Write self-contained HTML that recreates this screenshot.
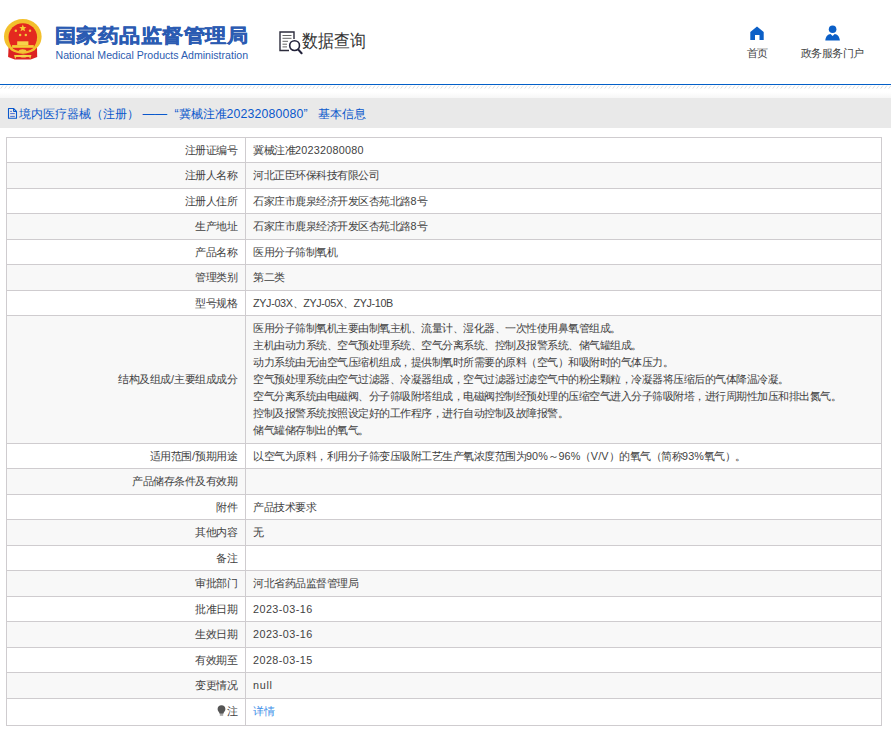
<!DOCTYPE html>
<html><head><meta charset="utf-8">
<style>
*{box-sizing:border-box}
html,body{margin:0;padding:0;background:#fff;width:891px;height:735px;overflow:hidden}
body{font-family:"Liberation Sans",sans-serif;color:#333;position:relative}
.abs{position:absolute}
#hdr{position:absolute;left:0;top:0;width:891px;height:84px;background:#fff}
#logo-cn{position:absolute;left:55px;top:23px;font-size:21px;letter-spacing:0.45px;font-weight:bold;color:#2b5bb2;-webkit-text-stroke:0.5px #2b5bb2;white-space:nowrap;transform-origin:0 0;transform:scale(1,0.9)}
#logo-en{position:absolute;left:55.5px;top:49px;font-size:10.6px;color:#2c5cb0;white-space:nowrap}
#sjcx{position:absolute;left:302px;top:29.5px;font-size:16px;color:#333;white-space:nowrap;transform-origin:0 0;transform:scale(1,1.13)}
.nav{position:absolute;font-size:10.8px;letter-spacing:-0.5px;color:#444;white-space:nowrap}
#bline{position:absolute;left:0;top:84px;width:891px;height:1px;background:#035fc8}
#hatch{position:absolute;left:0;top:85px;width:891px;height:5px}
#grad{position:absolute;left:0;top:92px;width:891px;height:6px;background:linear-gradient(#fff,#f6f6f6)}
#bar{position:absolute;left:0;top:98px;width:891px;height:29.5px;background:#e9e9e9}
#bartxt{position:absolute;left:19px;top:105.5px;font-size:12.3px;color:#0a58cc;white-space:nowrap}
table{position:absolute;left:6px;top:136.8px;width:876px;border-collapse:collapse;font-size:10.8px;letter-spacing:-0.5px;border:1px solid #cfcccf}
td{border:1px solid #cfcccf;height:25.5px;padding:0 7px;color:#3f3f3f;line-height:17px;vertical-align:middle}
td.l{width:239px;text-align:right;padding-right:8px}
tr:nth-child(even) td{background:#f8f8f8}
span.n{letter-spacing:0.1px}
a{color:#3d8fe8;text-decoration:none}
</style></head><body>
<div id="hdr">
 <svg class="abs" style="left:0;top:0" width="48" height="65" viewBox="0 0 48 65">
  <path d="M8.6 47 L8.1 57 L14.8 59.6 L30.6 59.6 L37.2 57 L37 47 Z" fill="#dc2222"/>
  <path d="M22.8 19.1 C33.3 19.1 41.6 27.2 41.6 36.6 C41.6 43 38.3 47.6 34 50.3 L22.8 53.6 L11.6 50.3 C7.3 47.6 4 43 4 36.6 C4 27.2 12.3 19.1 22.8 19.1 Z" fill="#f3c02c"/>
  <path d="M22.8 23.2 C30.8 23.2 37.1 29.5 37.1 37 C37.1 42 35 45.6 32.6 48.4 C29.6 50.8 26.5 51.2 22.8 51.2 C19.1 51.2 16 50.8 13 48.4 C10.6 45.6 8.5 42 8.5 37 C8.5 29.5 14.8 23.2 22.8 23.2 Z" fill="#e4291f"/>
  <path d="M22.8 24.6 L23.8 27 L26.4 27.2 L24.4 28.8 L25.1 31.3 L22.8 29.9 L20.5 31.3 L21.2 28.8 L19.2 27.2 L21.8 27 Z" fill="#f6cf35"/>
  <circle cx="15.8" cy="30.7" r="1.25" fill="#f2c63a"/>
  <circle cx="30" cy="30.7" r="1.25" fill="#f2c63a"/>
  <circle cx="20.1" cy="35" r="1.25" fill="#f2c63a"/>
  <circle cx="25.8" cy="35" r="1.25" fill="#f2c63a"/>
  <rect x="17.2" y="41.3" width="11.2" height="3.9" fill="#f7d24a"/>
  <rect x="12.1" y="45.1" width="21.7" height="2.7" fill="#f5cd36"/>
  <path d="M10 48 Q22.8 56 35.6 48 L35 50 Q22.8 57.5 10.6 50 Z" fill="#f3c02c"/>
  <ellipse cx="22.6" cy="50.8" rx="3.8" ry="1.6" fill="#f3c53a"/>
  <path d="M14.1 55 L31.4 55 L31 56.6 L30.2 59 L29.2 57 L16.2 57 L15.2 59 L14.4 56.6 Z" fill="#f3d046"/>
  <ellipse cx="23.5" cy="56.2" rx="3.5" ry="1.4" fill="#f6d54c"/>
 </svg>
 <div id="logo-cn">国家药品监督管理局</div>
 <div id="logo-en">National Medical Products Administration</div>
 <svg class="abs" style="left:278px;top:30px" width="26" height="26" viewBox="0 0 26 26">
  <path d="M11 20.5 H2 V2 H16 V9" fill="none" stroke="#2c2c3c" stroke-width="1.4"/>
  <path d="M4.5 5.5H13.5M4.5 8.3H13.5M4.5 11.3H10M4.5 14.2H9M4.5 16.9H9" stroke="#555" stroke-width="0.9"/>
  <circle cx="16.6" cy="15.6" r="4.9" fill="#fff" stroke="#22223a" stroke-width="1.6"/>
  <path d="M20.3 19.6 L23.6 23.2" stroke="#22223a" stroke-width="2.1" stroke-linecap="round"/>
 </svg>
 <div id="sjcx">数据查询</div>
 <svg class="abs" style="left:750px;top:26px" width="15" height="15" viewBox="0 0 15 15">
  <path d="M0.3 6 L7 0.5 L13.7 6 V14 H9.5 V9 H5 V14 H0.3 Z" fill="#0b5fc7"/>
 </svg>
 <div class="nav" style="left:746.5px;top:47px">首页</div>
 <svg class="abs" style="left:825px;top:25px" width="16" height="16" viewBox="0 0 16 16">
  <circle cx="7.6" cy="4.3" r="3.8" fill="#0b5fc7"/>
  <path d="M0.3 15.5 C0.8 11 3 9 5.5 8.9 L7.6 11 L9.7 8.9 C12.2 9 14.4 11 14.9 15.5 Z" fill="#0b5fc7"/>
 </svg>
 <div class="nav" style="left:800.5px;top:47px">政务服务门户</div>
</div>
<div id="bline"></div>
<svg id="hatch" width="891" height="5" viewBox="0 0 891 5"><defs><pattern id="hp" width="4" height="5" patternUnits="userSpaceOnUse"><path d="M0.6 3.7 L3 0.5" stroke="#dcdcdc" stroke-width="0.9"/></pattern></defs><rect width="891" height="5" fill="url(#hp)"/></svg>
<div id="grad"></div>
<div id="bar"></div>
<svg class="abs" style="left:7px;top:107px" width="12" height="13" viewBox="0 0 12 13">
 <path d="M1.5 1.5 H6.5 L9.5 4.5 V11.3 H1.5 Z" fill="none" stroke="#0a58cc" stroke-width="1.1" stroke-linejoin="round"/>
 <path d="M6.5 1.5 V4.5 H9.5" fill="none" stroke="#0a58cc" stroke-width="1"/>
 <path d="M3.2 4.4 H4.9 M3.2 6.6 H7.8 M3.2 9.4 H7.8" stroke="#3a5fd0" stroke-width="0.9"/>
</svg>
<div id="bartxt">境内医疗器械（注册） —— <span style="margin-left:4px">“</span>冀械注准<span style="letter-spacing:0.15px">20232080080</span>”<span style="margin-left:10.5px">基本信息</span></div>
<table>
<tr><td class="l">注册证编号</td><td>冀械注准<span class="n" style="letter-spacing:0.25px">20232080080</span></td></tr>
<tr><td class="l">注册人名称</td><td>河北正臣环保科技有限公司</td></tr>
<tr><td class="l">注册人住所</td><td>石家庄市鹿泉经济开发区杏苑北路<span class="n">8</span>号</td></tr>
<tr><td class="l">生产地址</td><td>石家庄市鹿泉经济开发区杏苑北路<span class="n">8</span>号</td></tr>
<tr><td class="l">产品名称</td><td>医用分子筛制氧机</td></tr>
<tr><td class="l">管理类别</td><td>第二类</td></tr>
<tr><td class="l">型号规格</td><td><span style="letter-spacing:-0.35px">ZYJ-03X、ZYJ-05X、ZYJ-10B</span></td></tr>
<tr><td class="l" style="height:127.5px">结构及组成<span class="n">/</span>主要组成成分</td><td>医用分子筛制氧机主要由制氧主机、流量计、湿化器、一次性使用鼻氧管组成。<br>主机由动力系统、空气预处理系统、空气分离系统、控制及报警系统、储气罐组成。<br>动力系统由无油空气压缩机组成，提供制氧时所需要的原料（空气）和吸附时的气体压力。<br>空气预处理系统由空气过滤器、冷凝器组成，空气过滤器过滤空气中的粉尘颗粒，冷凝器将压缩后的气体降温冷凝。<br>空气分离系统由电磁阀、分子筛吸附塔组成，电磁阀控制经预处理的压缩空气进入分子筛吸附塔，进行周期性加压和排出氮气。<br>控制及报警系统按照设定好的工作程序，进行自动控制及故障报警。<br>储气罐储存制出的氧气。</td></tr>
<tr><td class="l">适用范围<span class="n">/</span>预期用途</td><td>以空气为原料，利用分子筛变压吸附工艺生产氧浓度范围为<span class="n">90%</span>～<span class="n">96%</span>（<span class="n">V/V</span>）的氧气（简称<span class="n">93%</span>氧气）。</td></tr>
<tr><td class="l">产品储存条件及有效期</td><td></td></tr>
<tr><td class="l">附件</td><td>产品技术要求</td></tr>
<tr><td class="l">其他内容</td><td>无</td></tr>
<tr><td class="l">备注</td><td></td></tr>
<tr><td class="l">审批部门</td><td>河北省药品监督管理局</td></tr>
<tr><td class="l">批准日期</td><td><span class="n" style="letter-spacing:0.45px">2023-03-16</span></td></tr>
<tr><td class="l">生效日期</td><td><span class="n" style="letter-spacing:0.45px">2023-03-16</span></td></tr>
<tr><td class="l">有效期至</td><td><span class="n" style="letter-spacing:0.45px">2028-03-15</span></td></tr>
<tr><td class="l">变更情况</td><td><span class="n" style="letter-spacing:0.7px">null</span></td></tr>
<tr><td class="l" style="height:27px"><svg width="9" height="11" viewBox="0 0 9 11" style="vertical-align:-1px;margin-right:1px"><path d="M4.5 0.3 C2.2 0.3 0.6 2 0.6 4.1 C0.6 5.8 1.8 6.8 2.4 8 L2.6 8.8 L6.4 8.8 L6.6 8 C7.2 6.8 8.4 5.8 8.4 4.1 C8.4 2 6.8 0.3 4.5 0.3 Z" fill="#555"/><rect x="2.8" y="9.3" width="3.4" height="1.3" fill="#888"/></svg>注</td><td><a>详情</a></td></tr>
</table>
</body></html>
